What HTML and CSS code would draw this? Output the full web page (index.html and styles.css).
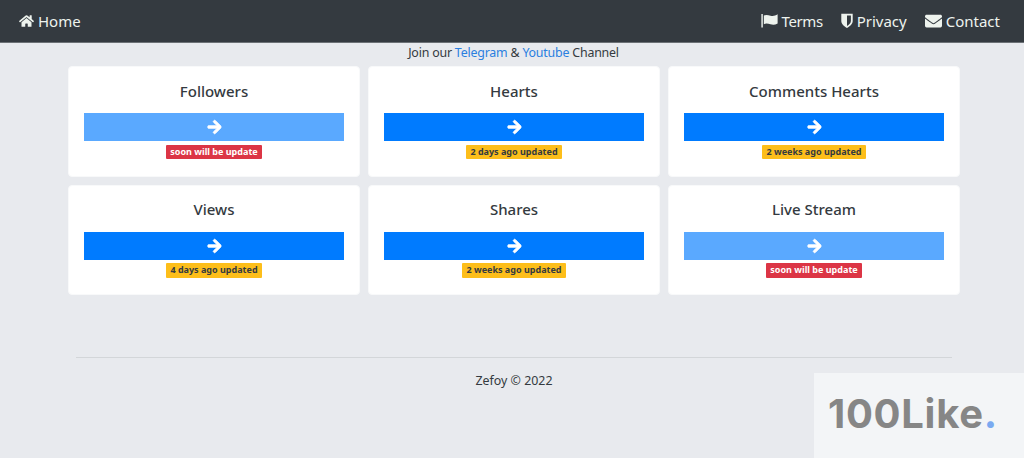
FILE: index.html
```html
<!DOCTYPE html>
<html lang="en">
<head>
  <meta charset="UTF-8">
  <meta name="viewport" content="width=device-width, initial-scale=1.0">
  <title>Zefoy</title>
  <link rel="stylesheet" href="styles.css">
</head>
<body>
  <nav class="navbar">
    <a class="nav-link" href="#">
      <svg class="icon-home" viewBox="0 0 576 512"><path d="M280.37 148.26L96 300.11V464a16 16 0 0 0 16 16l112.06-.29a16 16 0 0 0 15.92-16V368a16 16 0 0 1 16-16h64a16 16 0 0 1 16 16v95.64a16 16 0 0 0 16 16.05L464 480a16 16 0 0 0 16-16V300L295.67 148.26a12.19 12.19 0 0 0-15.3 0zM571.6 251.47L488 182.56V44.05a12 12 0 0 0-12-12h-56a12 12 0 0 0-12 12v72.61L318.47 43a48 48 0 0 0-61 0L4.34 251.47a12 12 0 0 0-1.6 16.9l25.5 31A12 12 0 0 0 45.15 301l235.22-193.74a12.19 12.19 0 0 1 15.3 0L530.9 301a12 12 0 0 0 16.9-1.6l25.5-31a12 12 0 0 0-1.7-16.93z"/></svg>
      Home
    </a>
    <div class="nav-right">
      <a class="nav-link terms" href="#">
        <svg class="icon-flag" viewBox="0 0 18 15"><path d="M0.4 0.6H1.9V15H0.4zM3 2.2C5 1 8 1.8 10 2.4C12.5 3.1 15 2.7 17.6 1V10.6C15 12.2 12.5 12.2 10 11.5C8 10.9 5 10.2 3 11.4Z"/></svg>
        Terms
      </a>
      <a class="nav-link" href="#">
        <svg class="icon-shield" viewBox="0 0 12 15"><path fill-rule="evenodd" d="M0.3 0.8H11.7V8C11.7 11.2 8.4 13.5 6 15C3.6 13.5 0.3 11.2 0.3 8ZM6 2.6V13C8 11.7 9.9 10.2 9.9 8V2.6Z"/></svg>
        Privacy
      </a>
      <a class="nav-link" href="#">
        <svg class="icon-mail" viewBox="0 64 512 384"><path d="M502.3 190.8c3.9-3.1 9.7-.2 9.7 4.7V400c0 26.5-21.5 48-48 48H48c-26.5 0-48-21.5-48-48V195.6c0-5 5.7-7.8 9.7-4.7 22.4 17.4 52.1 39.5 154.1 113.6 21.1 15.4 56.7 47.8 92.2 47.6 35.7.3 72-32.8 92.3-47.6 102-74.1 131.6-96.3 154-113.7zM256 320c23.2.4 56.6-29.2 73.4-41.4 132.7-96.3 142.8-104.7 173.4-128.7 5.8-4.5 9.2-11.5 9.2-18.9v-19c0-26.5-21.5-48-48-48H48C21.5 64 0 85.5 0 112v19c0 7.4 3.4 14.3 9.2 18.9 30.6 23.9 40.7 32.4 173.4 128.7 16.8 12.2 50.2 41.8 73.4 41.4z"/></svg>
        Contact
      </a>
    </div>
  </nav>

  <p class="join">Join our <a href="#">Telegram</a> &amp; <a href="#">Youtube</a> Channel</p>

  <main class="cards">
    <div class="card">
      <h5>Followers</h5>
      <button class="btn disabled" type="button"><svg class="arrow" viewBox="0 0 448 512"><use href="#arrow"/></svg></button>
      <span class="badge danger">soon will be update</span>
    </div>
    <div class="card">
      <h5>Hearts</h5>
      <button class="btn" type="button"><svg class="arrow" viewBox="0 0 448 512"><use href="#arrow"/></svg></button>
      <span class="badge warning">2 days ago updated</span>
    </div>
    <div class="card">
      <h5>Comments Hearts</h5>
      <button class="btn" type="button"><svg class="arrow" viewBox="0 0 448 512"><use href="#arrow"/></svg></button>
      <span class="badge warning">2 weeks ago updated</span>
    </div>
    <div class="card">
      <h5>Views</h5>
      <button class="btn" type="button"><svg class="arrow" viewBox="0 0 448 512"><use href="#arrow"/></svg></button>
      <span class="badge warning">4 days ago updated</span>
    </div>
    <div class="card">
      <h5>Shares</h5>
      <button class="btn" type="button"><svg class="arrow" viewBox="0 0 448 512"><use href="#arrow"/></svg></button>
      <span class="badge warning">2 weeks ago updated</span>
    </div>
    <div class="card">
      <h5>Live Stream</h5>
      <button class="btn disabled" type="button"><svg class="arrow" viewBox="0 0 448 512"><use href="#arrow"/></svg></button>
      <span class="badge danger">soon will be update</span>
    </div>
  </main>

  <footer class="footer">
    <hr>
    <p>Zefoy © 2022</p>
  </footer>

  <div class="watermark">100Like<span class="dot">.</span></div>

  <svg class="defs" width="0" height="0">
    <symbol id="arrow" viewBox="0 0 448 512"><path d="M190.5 66.9l22.2-22.2c9.4-9.4 24.6-9.4 33.9 0L441 239c9.4 9.4 9.4 24.6 0 33.9L246.6 467.3c-9.4 9.4-24.6 9.4-33.9 0l-22.2-22.2c-9.5-9.5-9.3-25 .4-34.3L311.4 296H24c-13.3 0-24-10.7-24-24v-32c0-13.3 10.7-24 24-24h287.4L190.9 101.2c-9.8-9.3-10-24.8-.4-34.3z"/></symbol>
  </svg>
</body>
</html>
```

FILE: styles.css
```css
* {
  box-sizing: border-box;
}
html, body {
  height: 100%;
}
body {
  margin: 0;
  overflow: hidden;
  font-family: "Noto Sans", "Open Sans", sans-serif;
  font-size: 12.4px;
  color: #343a40;
  background-color: #e8eaee;
}
a {
  color: #2a7fe0;
  text-decoration: none;
}
.navbar {
  display: flex;
  justify-content: space-between;
  align-items: center;
  height: 43px;
  padding: 0 24px 1px 19px;
  background-color: #343a40;
  border-bottom: 1px solid #6c7176;
}
.nav-right {
  display: flex;
  gap: 18px;
}
.nav-link {
  display: flex;
  align-items: center;
  gap: 4px;
  font-size: 15px;
  line-height: 20px;
  color: #eef3ee;
  fill: #eef3ee;
}
.terms {
  letter-spacing: -0.4px;
}
.icon-home {
  width: 15px;
  height: 14px;
}
.icon-flag {
  width: 17px;
  height: 15px;
}
.icon-shield {
  width: 12px;
  height: 15px;
}
.icon-mail {
  width: 17px;
  height: 14px;
}
.join {
  margin: 0;
  height: 23px;
  padding-left: 3px;
  line-height: 20px;
  letter-spacing: -0.2px;
  text-align: center;
}
.cards {
  display: grid;
  grid-template-columns: repeat(3, 1fr);
  gap: 8px;
  width: 892px;
  margin-left: 68px;
}
.card {
  display: flex;
  flex-direction: column;
  align-items: center;
  height: 110.5px;
  padding: 12.5px 15px 0;
  background: #fff;
  border: 1px solid #f8f9fa;
  border-radius: 4px;
}
.card h5 {
  margin: 0 0 11.5px;
  font-size: 15px;
  font-weight: 500;
  line-height: 22px;
  color: #343a40;
}
.btn {
  display: flex;
  justify-content: center;
  align-items: center;
  width: 100%;
  height: 28.4px;
  padding: 0;
  border: 0;
  background-color: #007bff;
}
.btn.disabled {
  background-color: #5aa9ff;
}
.arrow {
  width: 15px;
  height: 16px;
  fill: #fff;
  stroke: #fff;
  stroke-width: 28px;
}
.badge {
  margin-top: 3.5px;
  padding: 0 4px;
  font-size: 9px;
  font-weight: 700;
  line-height: 14.5px;
  border-radius: 1px;
}
.danger {
  color: #fff;
  background-color: #dc3545;
}
.warning {
  color: #343a40;
  background-color: #fdbe1a;
}
.footer {
  width: 876px;
  margin-left: 76px;
  text-align: center;
}
.footer hr {
  margin: 62px 0 14px;
  border: 0;
  border-top: 1px solid #d3d6d9;
}
.footer p {
  margin: 0;
  line-height: 18px;
}
.watermark {
  position: absolute;
  right: 0;
  bottom: 0;
  width: 210px;
  height: 85px;
  padding: 15px 0 0 14px;
  font-family: Inter, "Noto Sans", sans-serif;
  font-size: 40px;
  font-weight: 700;
  line-height: 52px;
  letter-spacing: 0.7px;
  color: #868686;
  background-color: #f3f5f7;
}
.dot {
  color: #7aa9f0;
}
.defs {
  position: absolute;
}
```
